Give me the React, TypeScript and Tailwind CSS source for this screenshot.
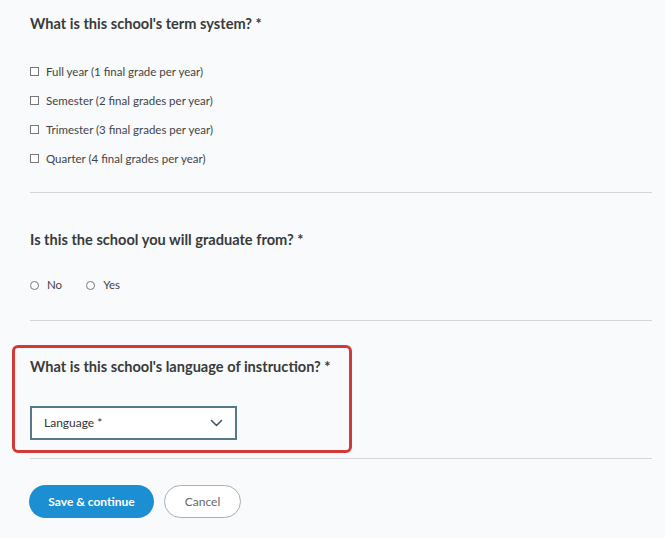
import React from "react"

const terms = [
  "Full year (1 final grade per year)",
  "Semester (2 final grades per year)",
  "Trimester (3 final grades per year)",
  "Quarter (4 final grades per year)",
]

const Heading = ({ children }: { children: React.ReactNode }) => (
  <h2 className="text-[14.6px] font-bold leading-[20px] text-[#3a3a3a]">{children}</h2>
)

export default function App() {
  return (
    <div
      className="min-h-[538px] w-[665px] bg-[#f8fafc] pl-[30px] pr-[13px] text-[#444]"
      style={{ fontFamily: "Lato, 'Open Sans', sans-serif" }}
    >
      {/* term system */}
      <div className="pt-[14px]">
        <Heading>What is this school's term system? *</Heading>
        <div className="mt-[23px] flex flex-col">
          {terms.map((t) => (
            <label key={t} className="flex h-[29px] items-center gap-[7px] text-[11.5px] text-[#444]">
              <span className="inline-block size-[9px] border border-[#777] bg-white" />
              {t}
            </label>
          ))}
        </div>
      </div>
      <div className="mt-[19px] h-px bg-[#d3d7db]" />

      {/* graduate */}
      <div className="pt-[37px]">
        <Heading>Is this the school you will graduate from? *</Heading>
        <div className="mt-[26px] flex h-[18px] items-center gap-[24px] text-[11.5px]">
          {["No", "Yes"].map((o) => (
            <label key={o} className="flex items-center gap-[8px]">
              <span className="inline-block size-[9px] rounded-full border border-[#777] bg-white" />
              {o}
            </label>
          ))}
        </div>
      </div>
      <div className="mt-[26px] h-px bg-[#d3d7db]" />

      {/* language - highlighted */}
      <div className="-ml-[18px] mt-[24px] h-[108px] w-[340px] rounded-[6px] border-[3px] border-[#d23a3a] pl-[15px] pt-[9px]">
        <Heading>What is this school's language of instruction? *</Heading>
        <div className="mt-[29px] flex h-[34px] w-[207px] items-center justify-between border-2 border-[#557a8e] bg-white pl-[12px] pr-[12px] text-[12px] text-[#333]">
          <span>Language *</span>
          <svg width="13" height="8" viewBox="0 0 13 8" fill="none">
            <path d="M1.5 1.5 6.5 6.5 11.5 1.5" stroke="#4a5560" strokeWidth="1.6" strokeLinecap="round" strokeLinejoin="round" />
          </svg>
        </div>
      </div>
      <div className="mt-[5px] h-px bg-[#d3d7db]" />

      {/* actions */}
      <div className="mt-[26px] flex items-center gap-[10px]">
        <button className="-ml-px h-[33px] w-[125px] rounded-full bg-[#1b8fd2] text-[12px] font-bold text-white">
          Save &amp; continue
        </button>
        <button className="h-[33px] w-[77px] rounded-full border border-[#a9afb4] bg-white text-[12px] text-[#666]">
          Cancel
        </button>
      </div>
    </div>
  )
}
